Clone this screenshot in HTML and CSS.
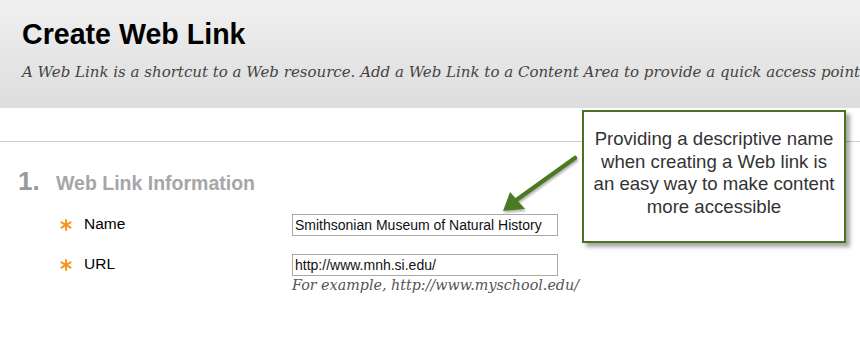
FILE: index.html
```html
<!DOCTYPE html>
<html>
<head>
<meta charset="utf-8">
<link rel="stylesheet" href="styles.css">
</head>
<body>
<div class="page">
  <header class="header">
    <h1 class="title">Create Web Link</h1>
    <p class="subtitle">A Web Link is a shortcut to a Web resource. Add a Web Link to a Content Area to provide a quick access point</p>
  </header>
  <div class="rule"></div>
  <section class="section">
    <h2 class="section-title"><span class="num">1.</span><span class="name">Web Link Information</span></h2>
    <div class="row">
      <div class="label"><svg class="req" width="12" height="12" viewBox="0 0 12 12"><g stroke="#f7931e" stroke-width="2" stroke-linecap="round"><line x1="6" y1="1" x2="6" y2="11"/><line x1="1.5" y1="3.4" x2="10.5" y2="8.6"/><line x1="1.5" y1="8.6" x2="10.5" y2="3.4"/></g></svg>Name</div>
      <div class="field"><div class="input">Smithsonian Museum of Natural History</div></div>
    </div>
    <div class="row">
      <div class="label"><svg class="req" width="12" height="12" viewBox="0 0 12 12"><g stroke="#f7931e" stroke-width="2" stroke-linecap="round"><line x1="6" y1="1" x2="6" y2="11"/><line x1="1.5" y1="3.4" x2="10.5" y2="8.6"/><line x1="1.5" y1="8.6" x2="10.5" y2="3.4"/></g></svg>URL</div>
      <div class="field"><div class="input">http://www.mnh.si.edu/</div><div class="hint">For example, http://www.myschool.edu/</div></div>
    </div>
  </section>
  <svg class="arrow" width="90" height="70" viewBox="0 0 90 70">
    <defs>
      <filter id="sh" x="-20%" y="-20%" width="140%" height="140%">
        <feGaussianBlur in="SourceAlpha" stdDeviation="1.2"/>
        <feOffset dx="1" dy="2" result="b"/>
        <feComponentTransfer><feFuncA type="linear" slope="0.3"/></feComponentTransfer>
        <feMerge><feMergeNode/><feMergeNode in="SourceGraphic"/></feMerge>
      </filter>
    </defs>
    <g filter="url(#sh)">
      <line x1="80" y1="8" x2="20" y2="51" stroke="#4c7a22" stroke-width="4.5" stroke-linecap="round"/>
      <polygon points="8,61 15,42 30,59" fill="#4c7a22"/>
    </g>
  </svg>
  <div class="callout">Providing a descriptive name<br>when creating a Web link is<br>an easy way to make content<br>more accessible</div>
</div>
</body>
</html>
```
FILE: styles.css
```css
html, body { margin: 0; padding: 0; background: #fff; }
.page { position: relative; width: 860px; height: 348px; overflow: hidden; }
.header {
  height: 108px;
  background: linear-gradient(#f0f0f0, #dddddd);
  padding: 0 0 0 22px;
  box-sizing: border-box;
  overflow: hidden;
  white-space: nowrap;
}
.title {
  margin: 0;
  padding-top: 15px;
  font: bold 28.6px/38px "Liberation Sans", Arial, sans-serif;
  color: #000;
}
.subtitle {
  margin: 9px 0 0;
  font: italic 15px/20px "DejaVu Serif", Georgia, serif;
  color: #444;
}
.rule { height: 1px; background: #cdcdcd; margin-top: 33px; }
.section { padding: 24px 0 0 18px; }
.section-title {
  margin: 0;
  display: flex;
  align-items: baseline;
  font-family: "Liberation Sans", Arial, sans-serif;
  font-weight: bold;
}
.num { font-size: 26px; color: #999; width: 38px; }
.name { font-size: 19.5px; color: #a6a6a6; }
.row {
  display: grid;
  grid-template-columns: 232px 1fr;
  padding-left: 42px;
}
.section-title + .row { margin-top: 17px; }
.row + .row { margin-top: 18px; }
.label {
  font: 15.5px/20px "Liberation Sans", Arial, sans-serif;
  color: #000;
  display: flex;
  align-items: flex-start;
}
.req { flex: none; margin: 5px 12px 0 0; }
.input {
  width: 266px;
  height: 22px;
  box-sizing: border-box;
  border: 1px solid #a9a9a9;
  padding: 0 2px;
  font: 14px/20px "Liberation Sans", Arial, sans-serif;
  color: #111;
}
.hint {
  font: italic 14.3px/18px "DejaVu Serif", Georgia, serif;
  color: #555;
}
.callout {
  position: absolute;
  left: 582px;
  top: 110px;
  width: 264px;
  height: 133px;
  box-sizing: border-box;
  border: 2px solid #4a7222;
  background: #fff;
  box-shadow: 4px 4px 4px rgba(0,0,0,0.35);
  padding: 16px 0 0;
  text-align: center;
  white-space: nowrap;
  font: 18.6px/22.5px "Liberation Sans", Arial, sans-serif;
  color: #333;
}
.arrow { position: absolute; left: 495px; top: 150px; }
```
